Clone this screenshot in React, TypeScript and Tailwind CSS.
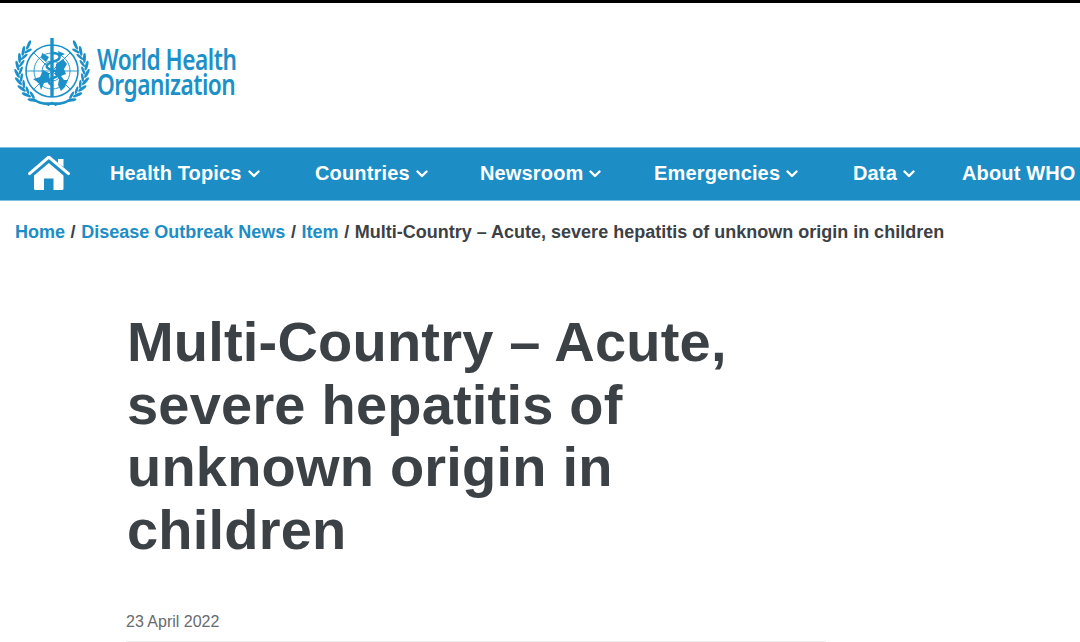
import React from "react";

function Chevron() {
  return (
    <svg width="12" height="8" viewBox="0 0 12 8" className="ml-[6px] mt-[2px]" fill="none" stroke="white" strokeWidth="2.4" strokeLinecap="round" strokeLinejoin="round">
      <path d="M1.5 1.5 L6 6 L10.5 1.5" />
    </svg>
  );
}

const thetas = [34, 47, 60, 73, 86, 99, 112, 125, 138];

function Leaves({ flip }: { flip?: boolean }) {
  const at = (r: number, deg: number): [number, number] => {
    const a = (deg * Math.PI) / 180;
    return [-r * Math.sin(a), r * Math.cos(a) - 1];
  };
  return (
    <g transform={flip ? "scale(-1 1)" : undefined}>
      {thetas.map((t) => {
        const [ox, oy] = at(35, t);
        const [ix, iy] = at(31.2, t + 5);
        return (
          <g key={t}>
            <ellipse cx={ox} cy={oy} rx="1.5" ry="5" transform={`rotate(${t - 90 - 24} ${ox} ${oy})`} />
            {t < 130 && <ellipse cx={ix} cy={iy} rx="1.3" ry="4.2" transform={`rotate(${t - 90 + 26} ${ix} ${iy})`} />}
          </g>
        );
      })}
      <path d="M1 32.5 C-6 34.5 -14 32.5 -21 27 L-18.5 26.5 C-12 30 -6 31 0 30 Z" />
    </g>
  );
}

function Logo() {
  return (
    <svg width="78" height="70" viewBox="-39 -36 78 70" fill="#1c90c8" className="shrink-0">
      <g fill="none" stroke="#1c90c8" strokeWidth="0.9">
        <circle cx="0" cy="-1" r="26" strokeWidth="1.6" />
        <circle cx="0" cy="-1" r="18" />
        <circle cx="0" cy="-1" r="10" />
        <path d="M-26 -1 H26 M-18.4 -19.4 L18.4 17.4 M18.4 -19.4 L-18.4 17.4" />
      </g>
      <path d="M-19 7 L-12 5 L-9 -2 L-3 1 L-2 10 L-8 11 L-11 18 L-13 11 Z" />
      <path d="M-10 -19 L-3 -15 L-6 -10 L-11 -14 Z" />
      <path d="M4 -8 L11 -13 L15 -8 L12 -3 L14 2 L9 4 L12 8 L16 8 L13 15 L9 19 L6 13 L7 7 L3 2 Z" />
      <path d="M-1.7 -34 H1.7 V25 H-1.7 Z" />
      <path d="M0 -19 C9 -19 10 -13 3 -11 C-7 -8 -8 -4 0 -2 C8 0 8 4 1 6 C-5 8 -4 12 1 13" fill="none" stroke="#1c90c8" strokeWidth="2.4" />
      <path d="M6 -21 L13 -18 L7 -15 Z" />
      <Leaves />
      <Leaves flip />
      <path d="M-5 34 L0 29.5 L5 34 L3.5 34 L0 31.5 L-3.5 34 Z" />
    </svg>
  );
}

function HomeIcon() {
  return (
    <svg width="42" height="35" viewBox="0 0 42 35" fill="white">
      <path d="M30 3 H35.5 V11 L30 7 Z" />
      <path d="M1.5 17.6 L20.8 1 L40.5 17.6" fill="none" stroke="white" strokeWidth="3" strokeLinecap="round" strokeLinejoin="round" />
      <path d="M6 19.5 L20.8 7 L35.5 19.5 V32.5 Q35.5 34 34 34 H25.5 V22.5 H16 V34 H7.5 Q6 34 6 32.5 Z" />
    </svg>
  );
}

const items: [string, string, boolean][] = [
  ["Health Topics", "w-[205px]", true],
  ["Countries", "w-[165px]", true],
  ["Newsroom", "w-[174px]", true],
  ["Emergencies", "w-[199px]", true],
  ["Data", "w-[109px]", true],
  ["About WHO", "", false],
];

function Sep() {
  return <span className="mx-[0.6px]"> / </span>;
}

export default function App() {
  return (
    <div className="w-[1080px] h-[642px] overflow-hidden bg-white font-['Liberation_Sans',Arial,sans-serif]">
      <div className="h-[3px] bg-black" />
      <header className="h-[144px] flex items-start pl-[13px] pt-[33px]">
        <Logo />
        <div className="ml-[6px] mt-[11px] origin-left scale-x-[0.81] text-[#1c90c8] text-[28px] leading-[25px] font-semibold font-['Noto_Sans',sans-serif] tracking-[-0.6px] whitespace-nowrap">
          World Health
          <br />
          Organization
        </div>
      </header>
      <nav className="h-[54px] pb-[2px] bg-[#1c8dc5] flex items-center overflow-hidden whitespace-nowrap border-y border-[#7cc0e2]">
        <div className="w-[110px] pl-[28px] shrink-0">
          <HomeIcon />
        </div>
        {items.map(([label, w, chev]) => (
          <div key={label} className={`${w} shrink-0 flex items-center text-white font-bold text-[20px] tracking-[0.15px] leading-none`}>
            {label}
            {chev && <Chevron />}
          </div>
        ))}
      </nav>
      <div className="pl-[15px] pt-[21px] text-[18px] leading-[20px] font-bold text-[#3c4146] whitespace-nowrap">
        <span className="text-[#1c8dc5]">Home</span><Sep /><span className="text-[#1c8dc5]">Disease Outbreak News</span><Sep /><span className="text-[#1c8dc5]">Item</span><Sep />Multi-Country – Acute, severe hepatitis of unknown origin in children
      </div>
      <main className="pl-[127px]">
        <h1 className="mt-[69px] w-[640px] text-[56px] tracking-[0.2px] leading-[62.67px] font-bold text-[#3c4146]">
          Multi-Country – Acute, severe hepatitis of unknown origin in children
        </h1>
        <div className="mt-[50px] -ml-px text-[16px] leading-[20px] text-[#666b70]">23 April 2022</div>
        <div className="mt-[9px] -ml-px w-[700px] h-px bg-[#eeeeee]" />
      </main>
    </div>
  );
}
